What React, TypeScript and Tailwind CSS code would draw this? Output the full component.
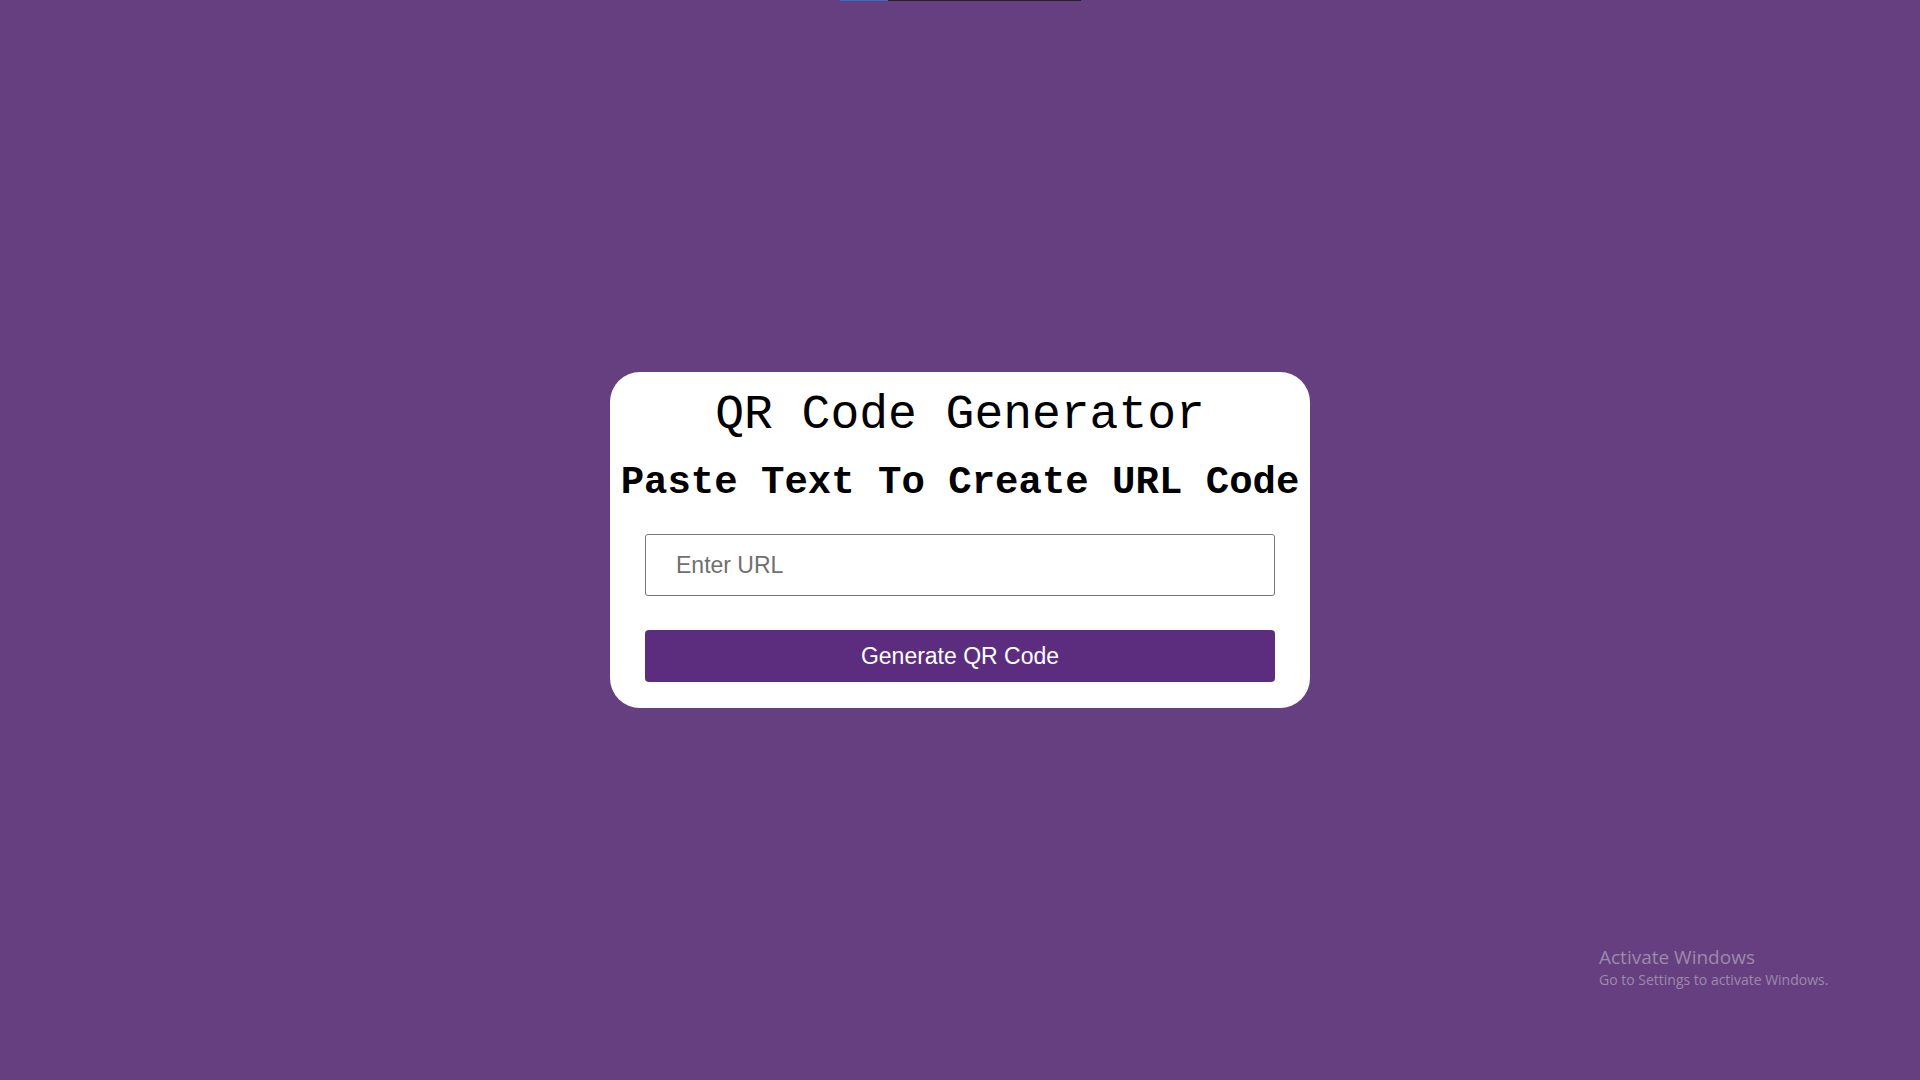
import { useState } from "react";

export default function App() {
  const [url, setUrl] = useState("");

  return (
    <div className="relative flex min-h-screen w-full items-center justify-center bg-[#663f80]">
      {/* thin loading strip at the very top */}
      <div className="absolute left-[840px] top-0 flex h-[1px] w-[241px] bg-[#222]">
        <div className="h-full w-[48px] bg-[#2f6fd0]" />
      </div>

      <div className="flex w-[700px] flex-col items-center rounded-[30px] bg-white px-[35px] pb-[26px] pt-[13px]">
        <h1 className="whitespace-nowrap font-['Liberation_Mono','Courier_New',monospace] text-[48px] font-normal leading-[60px] text-black">
          QR Code Generator
        </h1>
        <h2 className="mt-[13px] whitespace-nowrap font-['Liberation_Mono','Courier_New',monospace] text-[39px] font-bold leading-[50px] text-black">
          Paste Text To Create URL Code
        </h2>
        <input
          type="text"
          value={url}
          onChange={(e) => setUrl(e.target.value)}
          placeholder="Enter URL"
          className="mt-[26px] h-[62px] w-full rounded-[3px] border border-[#767676] bg-white pl-[30px] font-['Liberation_Sans',Arial,sans-serif] text-[23px] text-black outline-none placeholder:text-[#6f6f6f]"
        />
        <button
          type="button"
          className="mt-[34px] h-[52px] w-full rounded-[4px] bg-[#5c2d7e] font-['Liberation_Sans',Arial,sans-serif] text-[23px] text-white"
        >
          Generate QR Code
        </button>
      </div>

      {/* OS watermark */}
      <div className="pointer-events-none absolute left-[1599px] top-[944px] font-['Open_Sans','Noto_Sans',sans-serif] text-[#9c8aab]">
        <div className="text-[19px] leading-[26px]">Activate Windows</div>
        <div className="text-[14px] leading-[20px]">Go to Settings to activate Windows.</div>
      </div>
    </div>
  );
}
